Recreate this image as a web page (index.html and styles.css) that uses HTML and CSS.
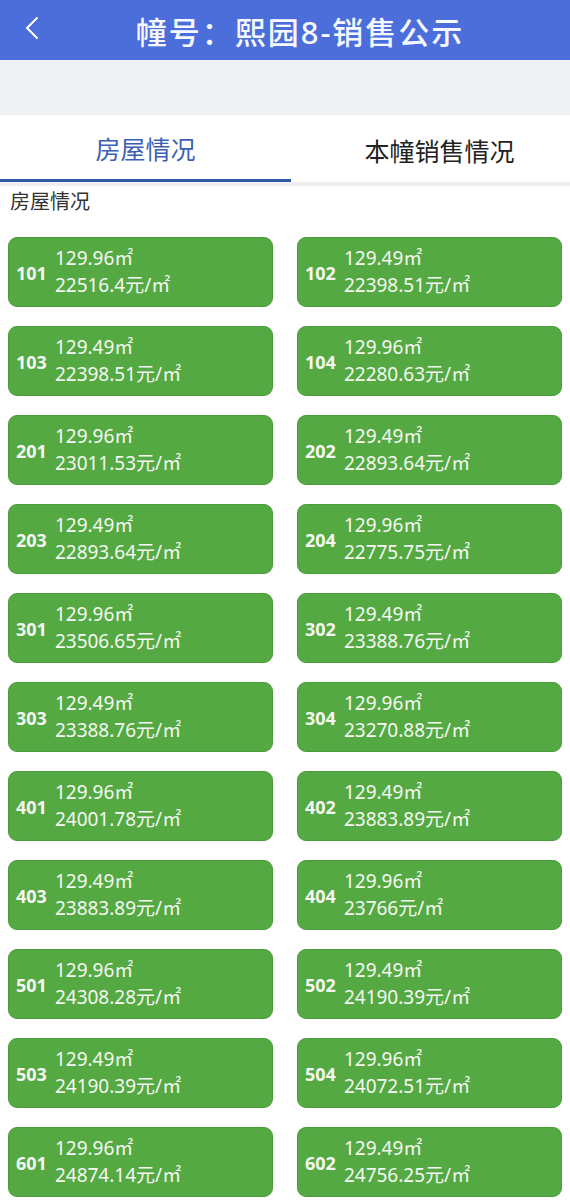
FILE: index.html
```html
<!DOCTYPE html>
<html lang="zh-CN">
<head>
    <meta charset="UTF-8">
    <meta name="viewport" content="width=device-width, initial-scale=1.0">
    <title>幢号：熙园8-销售公示</title>
    <link rel="stylesheet" href="styles.css">
</head>
<body>
    <!-- 顶部导航 -->
    <div class="nav-bar">
        <span class="back">
            <svg width="14" height="24" viewBox="0 0 14 24"><path d="M12 2 L2 12 L12 22" fill="none" stroke="#fff" stroke-width="2" stroke-linecap="round" stroke-linejoin="round"/></svg>
        </span>
        <h1>幢号：熙园8-销售公示</h1>
    </div>
    <div class="spacer"></div>

    <!-- 标签页 -->
    <div class="tabs">
        <div class="tab active">房屋情况</div>
        <div class="tab">本幢销售情况</div>
    </div>

    <div class="content">
        <div class="section-title">房屋情况</div>
        <div class="room-grid" id="roomGrid"></div>
    </div>

    <script>
        const rooms = [
            ['101', '129.96', '22516.4'], ['102', '129.49', '22398.51'],
            ['103', '129.49', '22398.51'], ['104', '129.96', '22280.63'],
            ['201', '129.96', '23011.53'], ['202', '129.49', '22893.64'],
            ['203', '129.49', '22893.64'], ['204', '129.96', '22775.75'],
            ['301', '129.96', '23506.65'], ['302', '129.49', '23388.76'],
            ['303', '129.49', '23388.76'], ['304', '129.96', '23270.88'],
            ['401', '129.96', '24001.78'], ['402', '129.49', '23883.89'],
            ['403', '129.49', '23883.89'], ['404', '129.96', '23766'],
            ['501', '129.96', '24308.28'], ['502', '129.49', '24190.39'],
            ['503', '129.49', '24190.39'], ['504', '129.96', '24072.51'],
            ['601', '129.96', '24874.14'], ['602', '129.49', '24756.25']
        ];
        const grid = document.getElementById('roomGrid');
        grid.innerHTML = rooms.map(([no, area, price]) => `
            <div class="room-card">
                <span class="room-no">${no}</span>
                <div class="room-info">
                    <div>${area}㎡</div>
                    <div>${price}元/㎡</div>
                </div>
            </div>`).join('');
    </script>
</body>
</html>
```

FILE: styles.css
```css
* { margin: 0; padding: 0; box-sizing: border-box; }
body {
    font-family: "Noto Sans", "Noto Sans CJK SC", sans-serif;
    background: #fff;
    color: #333;
}
.nav-bar {
    height: 60px;
    background: #4b6edb;
    display: flex;
    align-items: center;
    position: relative;
}
.nav-bar .back {
    position: absolute;
    left: 25px;
    top: 16px;
    line-height: 0;
}
.nav-bar h1 {
    flex: 1;
    text-align: center;
    padding-left: 30px;
    color: #f6f8ff;
    font-size: 31px;
    font-weight: 500;
    letter-spacing: 2px;
}
.spacer { height: 55px; background: #eff1f5; }
.tabs {
    display: flex;
    height: 71px;
    border-bottom: 4px solid #eceef2;
}
.tab {
    font-size: 25px;
    color: #222;
    display: flex;
    align-items: center;
    justify-content: center;
    padding-top: 2px;
}
.tab:first-child { width: 291px; }
.tab:last-child { flex: 1; padding-left: 18px; }
.tab.active {
    color: #3c5fb5;
    border-bottom: 3px solid #2f5aa8;
}
.content { padding: 2px 8px 0; }
.section-title {
    font-size: 20px;
    line-height: 28px;
    color: #333;
    padding-left: 2px;
    margin-bottom: 21px;
}
.room-grid {
    display: grid;
    grid-template-columns: 265px 265px;
    column-gap: 24px;
    row-gap: 19px;
}
.room-card {
    height: 70px;
    background: #55a943;
    border: 1px solid #4c9c3b;
    border-radius: 9px;
    display: flex;
    align-items: center;
    padding-left: 7px;
    color: #f4f8f1;
}
.room-no {
    font-size: 18px;
    font-weight: 700;
    margin-right: 8px;
    padding-top: 1px;
}
.room-info {
    font-size: 19px;
    line-height: 27px;
}
```
